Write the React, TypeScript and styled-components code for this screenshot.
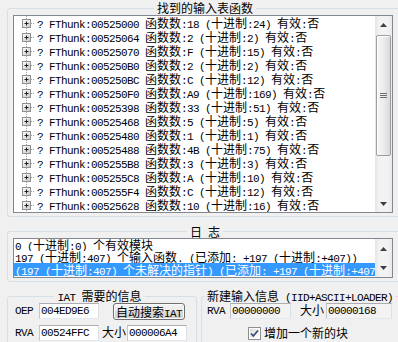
import React from 'react'
import styled, { createGlobalStyle } from 'styled-components'

const GlobalStyle = createGlobalStyle`
  html, body {
    margin: 0;
    padding: 0;
    background: #f0f0f0;
    overflow: hidden;
  }
  body {
    font-family: "Liberation Mono", "Noto Sans CJK SC", monospace;
    font-size: 11px;
    letter-spacing: -0.6px;
    color: #000;
  }
`

// CJK runs are set in a 12px CJK font, the rest in a 6px-per-char mono
const HAN = /([\u2E80-\u9FFF\uFF00-\uFFEF]+)/

const Han = styled.span`
  font-family: "Noto Sans CJK SC", sans-serif;
  font-size: 12px;
  letter-spacing: 0;
`

const Txt = ({ children }: { children: string }) => (
  <>
    {children.split(HAN).map((part, i) =>
      i % 2 ? <Han key={i}>{part}</Han> : <React.Fragment key={i}>{part}</React.Fragment>
    )}
  </>
)

const thunks = [
  ['00525000', '18', '24'],
  ['00525064', '2', '2'],
  ['00525070', 'F', '15'],
  ['005250B0', '2', '2'],
  ['005250BC', 'C', '12'],
  ['005250F0', 'A9', '169'],
  ['00525398', '33', '51'],
  ['00525468', '5', '5'],
  ['00525480', '1', '1'],
  ['00525488', '4B', '75'],
  ['005255B8', '3', '3'],
  ['005255C8', 'A', '10'],
  ['005255F4', 'C', '12'],
  ['00525628', '10', '16'],
]

const logLines = [
  '0 (十进制:0) 个有效模块',
  '197 (十进制:407) 个输入函数. (已添加: +197 (十进制:+407))',
  '(197 (十进制:407) 个未解决的指针) (已添加: +197 (十进制:+407))',
]

const App = () => {
  return (
    <Window>
      <GlobalStyle />

      <Group $w={396}>
        <Legend $h={14}><Txt>找到的输入表函数</Txt></Legend>
        <ListBox $h={198}>
          <ListBody $pt={0}>
            {thunks.map(([addr, hex, dec]) => (
              <TreeRow key={addr}>
                <TreeGlyph />
                <RowText>
                  <Txt>{`? FThunk:${addr} 函数数:${hex} (十进制:${dec}) 有效:否`}</Txt>
                </RowText>
              </TreeRow>
            ))}
          </ListBody>
          <ScrollBar>
            <ArrowBtn $h={17}><Arrow up /></ArrowBtn>
            <Track>
              <Thumb $h={121}>
                <svg width="7" height="5" viewBox="0 0 7 5">
                  <path d="M0 0.5h7M0 2.5h7M0 4.5h7" stroke="#6d6d6d" strokeWidth="1" />
                </svg>
              </Thumb>
            </Track>
            <ArrowBtn $h={17}><Arrow /></ArrowBtn>
          </ScrollBar>
        </ListBox>
      </Group>

      <Group $w={396} $mt={8}>
        <Legend $h={13}><Txt>日 志</Txt></Legend>
        <ListBox $h={40}>
          <ListBody $pt={0}>
            {logLines.map((line, i) => (
              <LogLine key={i} $sel={i === 2}>
                <Txt>{line}</Txt>
              </LogLine>
            ))}
          </ListBody>
          <ScrollBar>
            <ArrowBtn $h={19}><Arrow up /></ArrowBtn>
            <ArrowBtn $h={19}><Arrow /></ArrowBtn>
          </ScrollBar>
        </ListBox>
      </Group>

      <BottomRow>
        <Group $w={190} $pl={0}>
          <Legend $h={14}><Txt>IAT 需要的信息</Txt></Legend>
          <FieldRow $pl={7}>
            <FieldLabel $w={24}>OEP</FieldLabel>
            <Edit $w={60}>004ED9E6</Edit>
            <Button $ml={14}><Txt>自动搜索IAT</Txt></Button>
          </FieldRow>
          <FieldRow $pl={7} $mt={6}>
            <FieldLabel $w={24}>RVA</FieldLabel>
            <Edit $w={60}>00524FFC</Edit>
            <FieldLabel $w={24} $ml={3}><Txt>大小</Txt></FieldLabel>
            <Edit $w={60} $ml={1}>000006A4</Edit>
          </FieldRow>
        </Group>

        <Group $w={210}>
          <Legend $h={14} $left><Txt>新建输入信息 (IID+ASCII+LOADER)</Txt></Legend>
          <FieldRow $pl={0}>
            <FieldLabel $w={23}>RVA</FieldLabel>
            <Edit $w={61} $ro>00000000</Edit>
            <FieldLabel $w={26} $ml={9}><Txt>大小</Txt></FieldLabel>
            <Edit $w={66} $ro>00000168</Edit>
          </FieldRow>
          <FieldRow $pl={41} $mt={6}>
            <CheckLabel>
              <CheckBox />
              <Txt>增加一个新的块</Txt>
            </CheckLabel>
          </FieldRow>
        </Group>
      </BottomRow>
    </Window>
  )
}

export default App

const TreeGlyph = () => (
  <svg width="23" height="14" viewBox="0 0 23 14" style={{ flexShrink: 0 }}>
    <defs>
      <linearGradient id="pb" x1="0" y1="0" x2="1" y2="1">
        <stop offset="0" stopColor="#ffffff" />
        <stop offset="1" stopColor="#c6c6c6" />
      </linearGradient>
    </defs>
    <path d="M12.5 0v3M12.5 12v2" stroke="#a0a0a0" strokeDasharray="1 1" />
    <path d="M17 7.5h4" stroke="#a0a0a0" strokeDasharray="1 1" />
    <rect x="8.5" y="3.5" width="8" height="8" fill="url(#pb)" stroke="#919191" />
    <path d="M10.5 7.5h4M12.5 5.5v4" stroke="#1e1e1e" />
  </svg>
)

const Arrow = ({ up }: { up?: boolean }) => (
  <svg width="7" height="4" viewBox="0 0 7 4">
    <polygon points={up ? '0,4 3.5,0 7,4' : '0,0 7,0 3.5,4'} fill="#404040" />
  </svg>
)

const CheckBox = () => (
  <svg width="13" height="13" viewBox="0 0 13 13">
    <defs>
      <linearGradient id="cb" x1="0" y1="0" x2="1" y2="1">
        <stop offset="0" stopColor="#dcdcdc" />
        <stop offset="1" stopColor="#ffffff" />
      </linearGradient>
    </defs>
    <rect x="0.5" y="0.5" width="12" height="12" fill="#fff" stroke="#8e8f8f" />
    <rect x="2" y="2" width="9" height="9" fill="url(#cb)" />
    <path d="M3 6.5l2.3 2.5L10 3.5" fill="none" stroke="#3c4a72" strokeWidth="1.7" />
  </svg>
)

const Window = styled.div`
  width: 398px;
  height: 342px;
  overflow: hidden;
  box-sizing: border-box;
  padding: 1px 0 0 7px;
  display: flex;
  flex-direction: column;
`

const Group = styled.fieldset<{ $w: number; $mt?: number; $pl?: number }>`
  box-sizing: border-box;
  width: ${p => p.$w}px;
  min-width: 0;
  flex-shrink: 0;
  margin: ${p => p.$mt ?? 0}px 0 0;
  padding: 0 5px 3px ${p => p.$pl ?? 5}px;
  border: 1px solid #d5dfe5;
  border-radius: 3px;
`

const Legend = styled.legend<{ $h: number; $left?: boolean }>`
  height: ${p => p.$h}px;
  line-height: ${p => p.$h}px;
  padding: 0 ${p => (p.$left ? 2 : 3)}px;
  margin-inline: ${p => (p.$left ? '-2px auto' : 'auto')};
  white-space: pre;
`

const ListBox = styled.div<{ $h: number }>`
  box-sizing: border-box;
  width: 380px;
  height: ${p => p.$h}px;
  border: 1px solid #828790;
  background: #fff;
  display: flex;
  overflow: hidden;
`

const ListBody = styled.div<{ $pt: number }>`
  flex: 1;
  min-width: 0;
  overflow: hidden;
  padding-top: ${p => p.$pt}px;
`

const TreeRow = styled.div`
  display: flex;
  height: 14px;
  line-height: 14px;
  white-space: pre;
`

const RowText = styled.span`
  line-height: 14px;
`

const LogLine = styled.div<{ $sel?: boolean }>`
  height: ${p => (p.$sel ? 13 : 12)}px;
  line-height: ${p => (p.$sel ? 13 : 12)}px;
  padding-left: 1px;
  white-space: pre;
  overflow: hidden;
  background: ${p => (p.$sel ? '#3399ff' : 'transparent')};
  color: ${p => (p.$sel ? '#fff' : '#000')};
`

const ScrollBar = styled.div`
  width: 17px;
  flex-shrink: 0;
  display: flex;
  flex-direction: column;
  justify-content: space-between;
  background: linear-gradient(to right, #e4e4e4, #f2f2f2 25%, #f2f2f2 75%, #e9e9e9);
`

const ArrowBtn = styled.div<{ $h: number }>`
  height: ${p => p.$h}px;
  flex-shrink: 0;
  display: flex;
  align-items: center;
  justify-content: center;
`

const Track = styled.div`
  flex: 1;
  padding: 2px 1px 0;
`

const Thumb = styled.div<{ $h: number }>`
  box-sizing: border-box;
  height: ${p => p.$h}px;
  border: 1px solid #9e9e9e;
  border-radius: 2px;
  background: linear-gradient(to right, #f6f6f6, #ececec 50%, #d9d9d9);
  box-shadow: inset 1px 1px 0 #fff;
  display: flex;
  align-items: center;
  justify-content: center;
`

const BottomRow = styled.div`
  display: flex;
  gap: 4px;
  margin-top: 7px;
  width: 420px;
  flex-shrink: 0;
`

const FieldRow = styled.div<{ $pl: number; $mt?: number }>`
  display: flex;
  align-items: center;
  height: 16px;
  padding-left: ${p => p.$pl}px;
  margin-top: ${p => p.$mt ?? 0}px;
`

const FieldLabel = styled.span<{ $w: number; $ml?: number }>`
  width: ${p => p.$w}px;
  margin-left: ${p => p.$ml ?? 0}px;
  flex-shrink: 0;
  line-height: 16px;
  white-space: pre;
`

const Edit = styled.div<{ $w: number; $ml?: number; $ro?: boolean }>`
  box-sizing: border-box;
  width: ${p => p.$w}px;
  height: 16px;
  margin-left: ${p => p.$ml ?? 0}px;
  flex-shrink: 0;
  padding-left: 1px;
  line-height: 14px;
  border: 1px solid;
  border-color: #abadb3 #dbdfe6 #e3e9ef #c3c6cd;
  background: ${p => (p.$ro ? '#f3f3f3' : '#fff')};
  white-space: pre;
`

const Button = styled.button<{ $ml: number }>`
  box-sizing: border-box;
  width: 72px;
  height: 17px;
  margin-left: ${p => p.$ml}px;
  flex-shrink: 0;
  padding: 0;
  font: inherit;
  letter-spacing: inherit;
  line-height: 15px;
  color: #000;
  border: 1px solid #707070;
  border-radius: 3px;
  background: linear-gradient(#f2f2f2 0%, #ebebeb 49%, #dddddd 50%, #cfcfcf 100%);
  box-shadow: inset 0 0 0 1px #fcfcfc;
`

const CheckLabel = styled.label`
  display: flex;
  align-items: center;
  gap: 3px;
  line-height: 16px;
`
